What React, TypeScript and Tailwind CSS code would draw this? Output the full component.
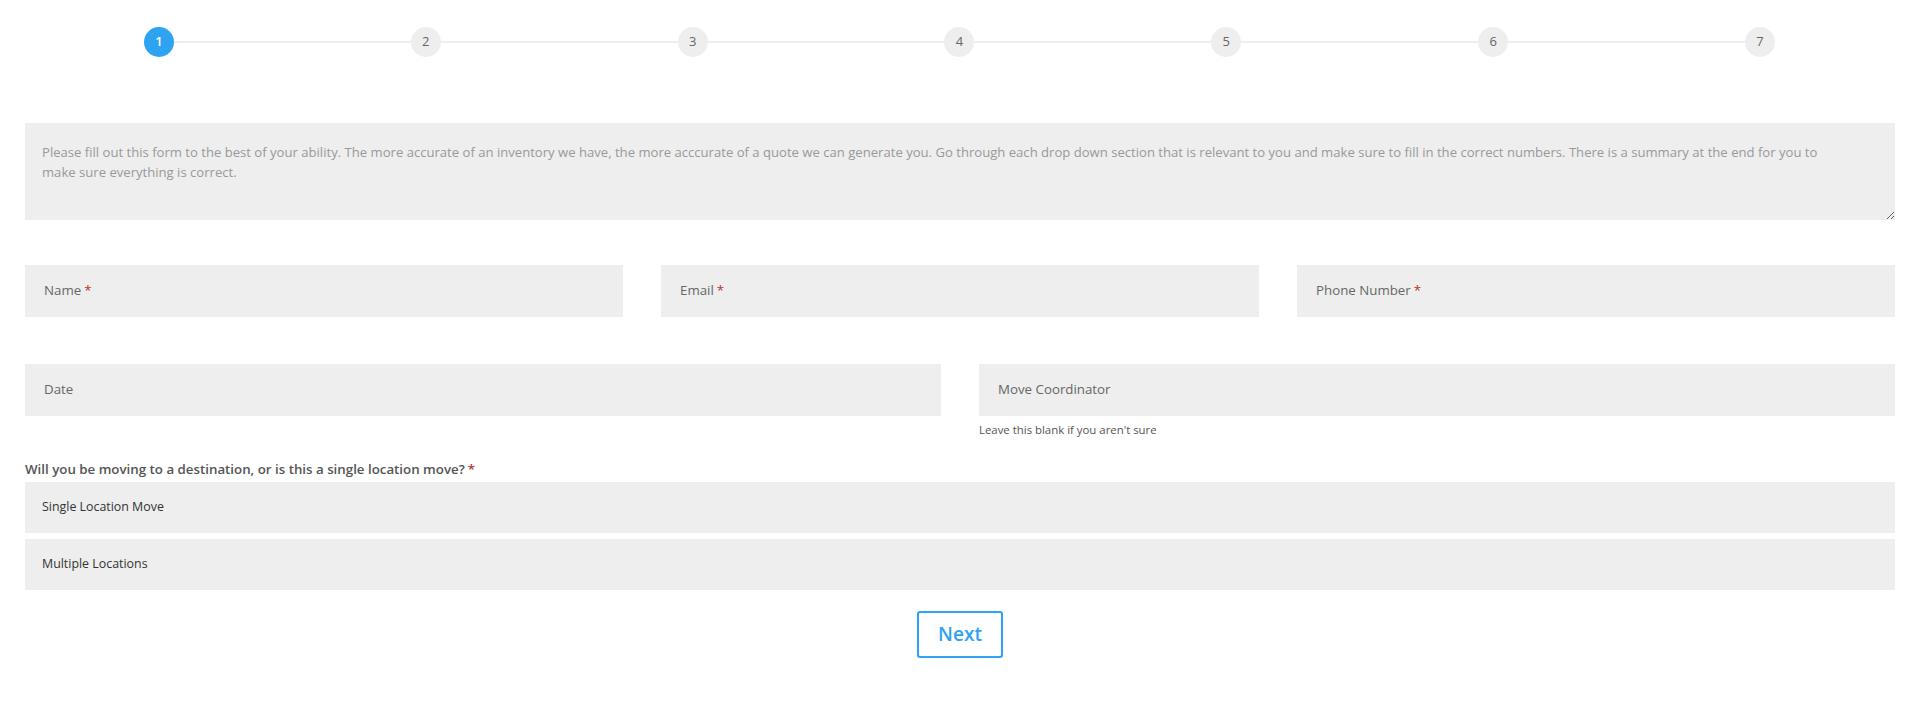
import React from 'react';

const STEPS = [1, 2, 3, 4, 5, 6, 7];

const INTRO =
  'Please fill out this form to the best of your ability. The more accurate of an inventory we have, the more acccurate of a quote we can generate you. Go through each drop down section that is relevant to you and make sure to fill in the correct numbers. There is a summary at the end for you to make sure everything is correct.';

function Req() {
  return <span className="ml-[3px] text-[#b5322c]">*</span>;
}

function Field({ label, required }: { label: string; required?: boolean }) {
  return (
    <div className="flex h-[52px] items-center bg-[#eeeeee] px-[19px] text-[13.3px] text-[#666]">
      {label}
      {required && <Req />}
    </div>
  );
}

function Stepper() {
  return (
    <div className="ml-[119px] mr-[120px] flex items-center pt-[27px]">
      {STEPS.map((n, i) => (
        <React.Fragment key={n}>
          {i > 0 && <div className="h-[2px] flex-1 bg-[#eeeeee]" />}
          <div
            className={
              n === 1
                ? 'flex h-[30px] w-[30px] shrink-0 items-center justify-center rounded-full bg-[#2ea3f2] text-[13px] font-semibold text-white'
                : 'flex h-[30px] w-[30px] shrink-0 items-center justify-center rounded-full bg-[#eeeeee] text-[13px] text-[#666]'
            }
          >
            {n}
          </div>
        </React.Fragment>
      ))}
    </div>
  );
}

export default function App() {
  return (
    <div className="min-h-screen bg-white pl-[25px] pr-[17px] font-['Open_Sans','Noto_Sans',sans-serif]">
      <Stepper />

      {/* Intro text */}
      <textarea
        readOnly
        placeholder={INTRO}
        className="mt-[66px] block h-[97px] w-full bg-[#eeeeee] pl-[17px] pr-[50px] pt-[19px] text-[13.1px] leading-[20px] text-[#999] outline-none placeholder:text-[#999]"
      />

      {/* Contact row */}
      <div className="mt-[45px] grid grid-cols-3 gap-[38px]">
        <Field label="Name" required />
        <Field label="Email" required />
        <Field label="Phone Number" required />
      </div>

      {/* Date / coordinator */}
      <div className="mt-[47px] grid grid-cols-2 gap-[38px]">
        <Field label="Date" />
        <div>
          <Field label="Move Coordinator" />
          <p className="mt-[6px] text-[11.4px] leading-[16px] text-[#555]">Leave this blank if you aren't sure</p>
        </div>
      </div>

      {/* Move type */}
      <div className="mt-[22px]">
        <p className="text-[13.3px] font-semibold leading-[18px] text-[#555]">
          Will you be moving to a destination, or is this a single location move?
          <Req />
        </p>
        <div className="mt-[4px] flex flex-col gap-[6px]">
          <div className="flex h-[51px] items-center bg-[#eeeeee] px-[17px] text-[12.4px] text-[#333]">
            Single Location Move
          </div>
          <div className="flex h-[51px] items-center bg-[#eeeeee] px-[17px] text-[12.4px] text-[#333]">
            Multiple Locations
          </div>
        </div>
      </div>

      <div className="mt-[21px] flex justify-center">
        <button className="h-[47px] w-[86px] rounded-[3px] border-2 border-[#2ea3f2] text-[19px] font-semibold text-[#2ea3f2]">
          Next
        </button>
      </div>
    </div>
  );
}
